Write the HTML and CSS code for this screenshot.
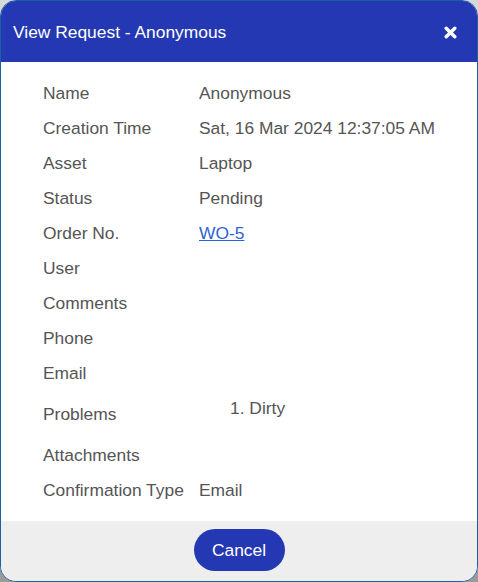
FILE: index.html
```html
<!DOCTYPE html>
<html>
<head>
<meta charset="utf-8">
<link rel="stylesheet" href="styles.css">
</head>
<body>
<div class="modal">
  <div class="modal-header">
    <span class="title">View Request - Anonymous</span>
    <button class="close" aria-label="Close">
      <svg width="13" height="13" viewBox="0 0 13 13"><path d="M2.2 2.2 L10.8 10.8 M10.8 2.2 L2.2 10.8" stroke="#fff" stroke-width="3.4" stroke-linecap="round"/></svg>
    </button>
  </div>
  <div class="modal-body">
    <div class="row"><div class="label">Name</div><div class="value">Anonymous</div></div>
    <div class="row"><div class="label">Creation Time</div><div class="value">Sat, 16 Mar 2024 12:37:05 AM</div></div>
    <div class="row"><div class="label">Asset</div><div class="value">Laptop</div></div>
    <div class="row"><div class="label">Status</div><div class="value">Pending</div></div>
    <div class="row"><div class="label">Order No.</div><div class="value"><a href="#" class="link">WO-5</a></div></div>
    <div class="row"><div class="label">User</div><div class="value"></div></div>
    <div class="row"><div class="label">Comments</div><div class="value"></div></div>
    <div class="row"><div class="label">Phone</div><div class="value"></div></div>
    <div class="row"><div class="label">Email</div><div class="value"></div></div>
    <div class="row row-tall"><div class="label">Problems</div><div class="value value-top"><ol class="problems"><li>Dirty</li></ol></div></div>
    <div class="row"><div class="label">Attachments</div><div class="value"></div></div>
    <div class="row"><div class="label">Confirmation Type</div><div class="value">Email</div></div>
  </div>
  <div class="modal-footer">
    <button class="btn-cancel">Cancel</button>
  </div>
</div>
</body>
</html>
```

FILE: styles.css
```css
html, body {
  margin: 0;
  padding: 0;
}
body {
  width: 478px;
  height: 582px;
  background: linear-gradient(#d6d9dc, #9a9a9a);
  font-family: "Liberation Sans", Arial, sans-serif;
  font-size: 17.4px;
}
.modal {
  box-sizing: border-box;
  width: 478px;
  height: 582px;
  border: 1px solid #1a619f;
  border-radius: 16px;
  overflow: hidden;
  display: flex;
  flex-direction: column;
  background: #fff;
}
.modal-header {
  height: 61px;
  flex: none;
  background: #2538b4;
  display: flex;
  align-items: center;
  justify-content: space-between;
  padding: 2px 20px 0 12px;
  box-sizing: border-box;
}
.title {
  color: #fff;
  font-size: 17.4px;
}
.close {
  background: none;
  border: 0;
  padding: 0;
  display: flex;
  cursor: pointer;
}
.modal-body {
  flex: 1;
  padding: 13.5px 0 0 42px;
  color: #555;
}
.row {
  display: flex;
  height: 35px;
  align-items: center;
}
.row-tall {
  height: 47px;
}
.label {
  width: 156px;
  flex: none;
}
.value {
  flex: 1;
}
.value-top {
  align-self: flex-start;
  padding-top: 7px;
}
.problems {
  margin: 0;
  padding-left: 31px;
  list-style-position: inside;
  line-height: 20px;
}
.link {
  color: #2e63d3;
  text-decoration: underline;
}
.modal-footer {
  height: 60px;
  flex: none;
  background: #eeeeee;
  display: flex;
  justify-content: center;
  align-items: flex-start;
  padding-top: 8px;
  box-sizing: border-box;
}
.btn-cancel {
  width: 91px;
  height: 42px;
  border: 0;
  border-radius: 21px;
  background: #2538b4;
  color: #fff;
  font-family: "Liberation Sans", Arial, sans-serif;
  font-size: 17.4px;
  padding: 0;
}
```
